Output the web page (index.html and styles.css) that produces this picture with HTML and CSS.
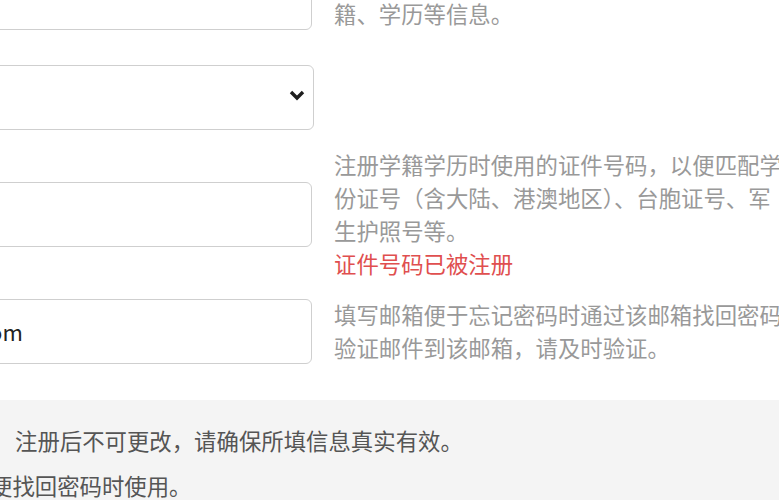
FILE: index.html
```html
<!DOCTYPE html>
<html lang="zh-CN">
<head>
<meta charset="utf-8">
<title>注册</title>
<link rel="stylesheet" href="styles.css">
</head>
<body>
<div class="form">
  <div class="row row-first">
    <div class="field"><div class="input"></div></div>
    <div class="help">
      <span class="line">请填写真实姓名，以便匹配学</span>
      <span class="line">籍、学历等信息。</span>
    </div>
  </div>
  <div class="row row-select">
    <div class="field">
      <div class="select">
        <svg class="chevron" width="16" height="11" viewBox="0 0 16 11"><polyline points="2,2 8,8 14,2" fill="none" stroke="#1e1e1e" stroke-width="3.4" stroke-linejoin="miter"/></svg>
      </div>
    </div>
  </div>
  <div class="row">
    <div class="field"><div class="input"></div></div>
    <div class="help">
      <span class="line">注册学籍学历时使用的证件号码，以便匹配学</span>
      <span class="line">份证号（含大陆、港澳地区）、台胞证号、军</span>
      <span class="line">生护照号等。</span>
      <span class="line error">证件号码已被注册</span>
    </div>
  </div>
  <div class="row">
    <div class="field"><div class="input input-filled"><span class="value">zhangsan@163.com</span></div></div>
    <div class="help">
      <span class="line">填写邮箱便于忘记密码时通过该邮箱找回密码</span>
      <span class="line">验证邮件到该邮箱，请及时验证。</span>
    </div>
  </div>
</div>
<div class="notice">
  <p class="notice-item notice-first">注册后不可更改，请确保所填信息真实有效。</p>
  <p class="notice-item notice-second">便找回密码时使用。</p>
</div>
</body>
</html>
```
FILE: styles.css
```css
html, body {
  margin: 0;
  padding: 0;
  background: #fff;
  overflow: hidden;
  width: 779px;
  height: 500px;
}
body {
  font-family: "Noto Sans CJK SC", "Microsoft YaHei", sans-serif;
  font-size: 22.4px;
  color: #333;
}
.form {
  margin-top: -36px;
  margin-left: -300px;
}
.row {
  display: flex;
  align-items: center;
  margin-top: 18px;
}
.row-first {
  margin-top: 0;
}
.row-select {
  margin-top: 35px;
}
.field {
  width: 612px;
  flex: none;
}
.input {
  box-sizing: border-box;
  height: 65px;
  border: 1px solid #cfcfcf;
  border-radius: 6px;
  background: #fff;
  display: flex;
  align-items: center;
  padding-left: 116px;
}
.value {
  color: #222;
  font-size: 22px;
  white-space: nowrap;
}
.select {
  box-sizing: border-box;
  height: 65px;
  width: 614px;
  border: 1px solid #cfcfcf;
  border-radius: 6px;
  background: #fff;
  display: flex;
  align-items: center;
  justify-content: flex-end;
  padding-right: 8px;
}
.chevron {
  display: block;
  margin-top: -4px;
}
.help {
  margin-left: 22px;
  color: #999;
  line-height: 33px;
  white-space: nowrap;
}
.line {
  display: block;
}
.error {
  color: #e04f4f;
}
.notice {
  margin-top: 36px;
  background: #f4f4f4;
  padding: 24px 0 20px;
  color: #555;
  line-height: 33px;
}
.notice-item {
  margin: 0;
  white-space: nowrap;
}
.notice-first {
  padding-left: 15px;
}
.notice-second {
  margin-top: 12px;
  margin-left: -10px;
}
```
